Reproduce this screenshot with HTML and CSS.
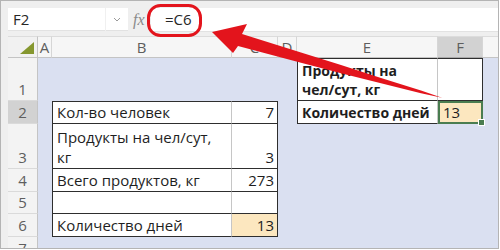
FILE: index.html
```html
<!DOCTYPE html>
<html>
  <head>
    <title>Excel - Количество дней</title>
    <link rel="stylesheet" href="styles.css">
  </head>
  <body>
    <div class="xl_window">
      <!-- Строка формул -->
      <div class="xl_bar">
        <div class="xl_namebox">
          <span class="xl_name">F2</span>
          <span class="xl_drop">
            <svg width="8" height="5" viewBox="0 0 8 5"><polyline points="1,1 4,4 7,1" fill="none" stroke="#9a9a9a" stroke-width="1"/></svg>
          </span>
        </div>
        <span class="xl_fx">fx</span>
        <div class="xl_formula">=C6</div>
      </div>

      <!-- Лист -->
      <div class="xl_sheet">
        <!-- заголовки столбцов -->
        <div class="hd corner"><span class="corner_tri"></span></div>
        <div class="hd">A</div>
        <div class="hd">B</div>
        <div class="hd">C</div>
        <div class="hd">D</div>
        <div class="hd">E</div>
        <div class="hd hd_sel">F</div>
        <div class="hd hd_last"></div>

        <!-- строка 1 -->
        <div class="rh">1</div>
        <div></div><div></div><div></div><div></div>
        <div class="c t bl bt bb gr b">Продукты на<br>чел/сут, кг</div>
        <div class="c t bt br bb"></div>
        <div></div>

        <!-- строка 2 -->
        <div class="rh rh_sel">2</div>
        <div></div>
        <div class="c t bl bt bb gr">Кол-во человек</div>
        <div class="c t bt br bb num">7</div>
        <div></div>
        <div class="c t bl bb gr b">Количество дней</div>
        <div class="c t fill sel">13</div>
        <div></div>

        <!-- строка 3 -->
        <div class="rh">3</div>
        <div></div>
        <div class="c t bl bb gr">Продукты на чел/сут,<br>кг</div>
        <div class="c t br bb num">3</div>
        <div></div><div></div><div></div><div></div>

        <!-- строка 4 -->
        <div class="rh">4</div>
        <div></div>
        <div class="c t bl bb gr">Всего продуктов, кг</div>
        <div class="c t br bb num">273</div>
        <div></div><div></div><div></div><div></div>

        <!-- строка 5 -->
        <div class="rh">5</div>
        <div></div>
        <div class="c t bl bb gr"></div>
        <div class="c t br bb"></div>
        <div></div><div></div><div></div><div></div>

        <!-- строка 6 -->
        <div class="rh">6</div>
        <div></div>
        <div class="c t bl bb gr">Количество дней</div>
        <div class="c t br bb num fill">13</div>
        <div></div><div></div><div></div><div></div>

        <!-- строка 7 -->
        <div class="rh rh_cut">7</div>
        <div></div><div></div><div></div><div></div><div></div><div></div><div></div>
      </div>

      <!-- Пометка: рамка и стрелка -->
      <svg class="xl_note" width="500" height="250" viewBox="0 0 500 250">
        <rect x="147.5" y="4.5" width="52" height="30" rx="12" ry="12" fill="none" stroke="#e3141c" stroke-width="3"/>
        <polygon fill="#e3141c" points="211,31 246,23 241,33 300,51.5 340,64 380,77 420,89.5 441,96.8 420,92.2 380,82.3 340,72.3 300,61.8 237,45 232,52"/>
      </svg>
    </div>
  </body>
</html>
```

FILE: styles.css
```css
body {
  margin: 0;
  font-family: "Open Sans", "Liberation Sans", sans-serif;
}

.xl_window {
  position: relative;
  width: 499px;
  height: 249px;
  box-sizing: border-box;
  border: 1px solid #b4b4b4;
  background: #efefef;
  display: flex;
  flex-direction: column;
  overflow: hidden;
}

/* Строка формул */
.xl_bar {
  flex-shrink: 0;
  height: 35px;
  box-sizing: border-box;
  padding: 7px 0 0 7px;
  display: flex;
  align-items: flex-start;
}

.xl_namebox {
  width: 120px;
  height: 23px;
  background: #ffffff;
  display: flex;
  align-items: center;
  box-sizing: border-box;
  border-bottom: 1px solid #e2e2e2;
}

.xl_name {
  flex: 1;
  padding-left: 5px;
  font-size: 15px;
  color: #262626;
}

.xl_drop {
  width: 22px;
  height: 23px;
  display: flex;
  align-items: center;
  justify-content: center;
  border-left: 1px solid #f0f0f0;
}

.xl_fx {
  width: 18px;
  margin-left: 5px;
  font-family: "Liberation Serif", serif;
  font-style: italic;
  font-size: 16px;
  color: #8a8a8a;
  line-height: 23px;
}

.xl_formula {
  flex: 1;
  height: 23px;
  background: #ffffff;
  padding-left: 14px;
  font-size: 15px;
  line-height: 23px;
  color: #262626;
  border-bottom: 1px solid #e2e2e2;
}

/* Лист */
.xl_sheet {
  flex: 1;
  min-height: 0;
  overflow: hidden;
  margin-left: 7px;
  display: grid;
  grid-template-columns: 30px 14px 180px 46px 19px 141px 45px 1fr;
  grid-template-rows: 22px 43px 23px 45px 23px 22px 23px minmax(0, 1fr);
  background: #dae0f1;
  font-size: 15px;
}

.hd {
  background: #f6f6f6;
  border-right: 1px solid #d6d6d6;
  border-bottom: 1px solid #c4c4c4;
  border-top: 1px solid #dcdcdc;
  box-sizing: border-box;
  color: #5e5e5e;
  display: flex;
  align-items: center;
  justify-content: center;
}

.hd_sel {
  background: #d2d2d2;
  border-bottom-color: #a9a9a9;
}

.hd_last {
  border-right: none;
}

.corner {
  position: relative;
  background: #f1f1f1;
  border-right-color: #c4c4c4;
}

.corner_tri {
  position: absolute;
  right: 3px;
  bottom: 3px;
  width: 0;
  height: 0;
  border-left: 14px solid transparent;
  border-bottom: 12px solid #85972f;
}

.rh {
  background: #f3f3f3;
  border-right: 1px solid #c4c4c4;
  border-bottom: 1px solid #dadada;
  box-sizing: border-box;
  color: #5e5e5e;
  display: flex;
  align-items: flex-end;
  justify-content: center;
  padding-bottom: 1px;
  line-height: 20px;
}

.rh_sel {
  background: #d2d2d2;
}

.rh_cut {
  border-bottom: none;
  align-items: flex-start;
  padding-top: 1px;
}

/* Ячейки */
.c {
  box-sizing: border-box;
  display: flex;
  align-items: flex-end;
  padding: 0 3px 1px 4px;
  line-height: 20px;
  color: #1e1e1e;
  white-space: nowrap;
}

.t {
  background: #ffffff;
}

.bl { border-left: 1px solid #2e2e2e; }
.bt { border-top: 1px solid #2e2e2e; }
.br { border-right: 1px solid #2e2e2e; }
.bb { border-bottom: 1px solid #2e2e2e; }
.gr { border-right: 1px solid #c6c6c6; }

.b {
  font-weight: bold;
  font-size: 14px;
  line-height: 19px;
}

.num {
  justify-content: flex-end;
}

.fill {
  background: #fce7bf;
}

/* Выделенная ячейка */
.sel {
  position: relative;
  border: 2px solid #4a7d50;
  padding-left: 3px;
  padding-bottom: 0;
}

.sel::after {
  content: "";
  position: absolute;
  right: -4px;
  bottom: -4px;
  width: 5px;
  height: 5px;
  background: #4a7d50;
  border: 1px solid #ffffff;
}

/* Пометка поверх листа */
.xl_note {
  position: absolute;
  left: 0;
  top: 0;
  pointer-events: none;
}
```
